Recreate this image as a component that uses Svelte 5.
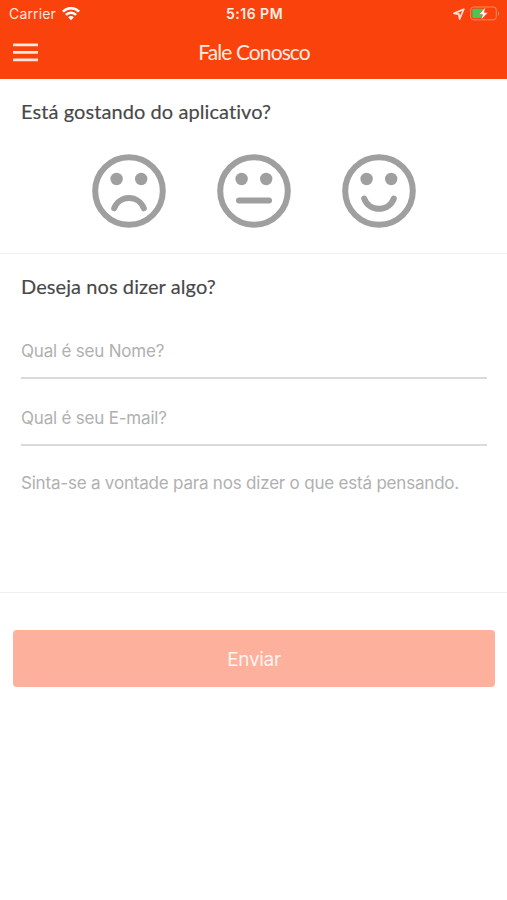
<script>
	const faces = [
		{ name: 'Não', mouth: 'M25.2 57.3 A15.8 15.8 0 0 1 54.8 57.3' },
		{ name: 'Mais ou menos', mouth: 'M25 49.4 H55' },
		{ name: 'Sim', mouth: 'M25.2 47.6 A15.8 15.8 0 0 0 54.8 47.6' }
	]

	let nome = $state('')
	let email = $state('')
	let mensagem = $state('')
</script>

<div class="screen">
	<header>
		<div class="status">
			<div class="carrier">
				<span>Carrier</span>
				<svg width="18" height="14" viewBox="0 0 18 14" fill="none" stroke="#fff" stroke-width="2.6">
					<path d="M.9 4.6 C5.5 0 12.5 0 17.1 4.6" />
					<path d="M3.9 7.9 C6.8 5 11.2 5 14.1 7.9" />
					<path d="M6.2 10.3 C7.8 8.7 10.2 8.7 11.8 10.3 L9 13.3 Z" fill="#fff" stroke="none" />
				</svg>
			</div>
			<span class="time">5:16 PM</span>
			<div class="battery">
				<svg width="12" height="12" viewBox="0 0 12 12" fill="none" stroke="#ffe3d8" stroke-width="1.7" stroke-linejoin="round">
					<path d="M1 5.4 L10.8 1.2 L6.6 11 L5.9 6.2 Z" />
				</svg>
				<svg width="30" height="15" viewBox="0 0 30 15">
					<rect x=".7" y="1" width="25.6" height="12.8" rx="3" fill="none" stroke="#ff8a62" />
					<rect x="2.4" y="2.7" width="10.8" height="9.4" rx="1" fill="#3fcb55" />
					<path d="M28 5 Q30.4 7.4 28 9.8 Z" fill="#ff8a62" />
					<path d="M15.6 1 L8.8 8.4 H12.6 L11.2 13.8 L18 6.4 H14.2 Z" fill="#fff" stroke="#f9420c" stroke-width=".5" />
				</svg>
			</div>
		</div>
		<div class="navbar">
			<button class="menu" aria-label="Menu">
				<svg width="25" height="19" viewBox="0 0 25 19" stroke="#ffe6dc" stroke-width="2.8">
					<path d="M0 1.9 H25 M0 9.4 H25 M0 16.9 H25" />
				</svg>
			</button>
			<h1>Fale Conosco</h1>
		</div>
	</header>

	<section class="rating">
		<h2>Está gostando do aplicativo?</h2>
		<div class="faces">
			{#each faces as face}
				<button class="face" aria-label={face.name}>
					<svg width="80" height="80" viewBox="0 0 80 80">
						<circle cx="40" cy="40" r="33.8" />
						<circle class="eye" cx="27.6" cy="28" r="6.2" />
						<circle class="eye" cx="52.2" cy="28" r="6.2" />
						<path d={face.mouth} />
					</svg>
				</button>
			{/each}
		</div>
	</section>

	<section class="message">
		<h2>Deseja nos dizer algo?</h2>
		<input class="nome" type="text" placeholder="Qual é seu Nome?" bind:value={nome} />
		<input class="email" type="email" placeholder="Qual é seu E-mail?" bind:value={email} />
		<textarea placeholder="Sinta-se a vontade para nos dizer o que está pensando." bind:value={mensagem}></textarea>
	</section>

	<div class="footer">
		<button class="send">Enviar</button>
	</div>
</div>

<style>
	:global(body) {
		margin: 0;
		background: #fff;
	}

	.screen {
		height: 900px;
		background: #fff;
		font-family: Inter, sans-serif;
		overflow: hidden;
	}

	button {
		padding: 0;
		border: 0;
		background: none;
	}

	header {
		height: 79px;
		background: #f9420c;
		color: #fff;
	}

	.status {
		display: grid;
		grid-template-columns: 1fr auto 1fr;
		align-items: center;
		height: 27px;
		padding: 0 7px 0 9px;
		font-size: 14px;
	}

	.carrier {
		display: flex;
		align-items: center;
		gap: 6px;
		letter-spacing: .15px;
		color: #ffe6dc;
	}

	.time {
		font-weight: 600;
		font-size: 14px;
		letter-spacing: .5px;
		color: #ffeee8;
	}

	.battery {
		display: flex;
		justify-content: flex-end;
		align-items: center;
		gap: 5px;
	}

	.navbar {
		display: grid;
		grid-template-columns: 26px 1fr 26px;
		align-items: center;
		height: 50px;
		padding: 0 12px 0 13px;
	}

	.menu svg {
		display: block;
	}

	h1 {
		margin: 0 0 2px;
		font: 400 21px Lato, sans-serif;
		letter-spacing: -.9px;
		text-align: center;
		color: #ffeae2;
	}

	h2 {
		margin: 0;
		font: 400 20px/24px Lato, sans-serif;
		font-variant-ligatures: none;
		letter-spacing: .08px;
		color: #484848;
		-webkit-text-stroke: .15px #484848;
	}

	.rating {
		box-sizing: border-box;
		height: 175px;
		padding: 20px 20px 0 21px;
		border-bottom: 1px solid #f0f0f0;
	}

	.faces {
		display: flex;
		justify-content: center;
		gap: 45.2px;
		margin-top: 28px;
	}

	.face {
		width: 80px;
		height: 80px;
	}

	.face svg {
		display: block;
		fill: none;
		stroke: #9f9f9f;
		stroke-width: 6;
		stroke-linecap: round;
	}

	.face .eye {
		fill: #9f9f9f;
		stroke: none;
	}

	.message {
		box-sizing: border-box;
		height: 339px;
		padding: 20px 20px 0 21px;
		border-bottom: 1px solid #f0f0f0;
	}

	input,
	textarea {
		display: block;
		box-sizing: border-box;
		width: 100%;
		border: 0;
		outline: none;
		padding: 0;
		background: none;
		resize: none;
		color: #444;
		font: 400 17px/24px Inter, sans-serif;
		letter-spacing: -.2px;
	}

	input {
		border-bottom: 2px solid #dadada;
	}

	.nome {
		height: 54px;
		margin-top: 27px;
	}

	.email {
		height: 54px;
		margin-top: 13px;
	}

	textarea {
		height: 110px;
		margin-top: 25px;
	}

	::placeholder {
		color: #b0b0b0;
		opacity: 1;
	}

	.footer {
		padding: 37px 12px 0 13px;
	}

	.send {
		width: 100%;
		height: 57px;
		padding-top: 2px;
		border-radius: 4px;
		background: #fdb09c;
		color: #fff3ef;
		font: 400 19px Inter, sans-serif;
		letter-spacing: -.3px;
	}
</style>
